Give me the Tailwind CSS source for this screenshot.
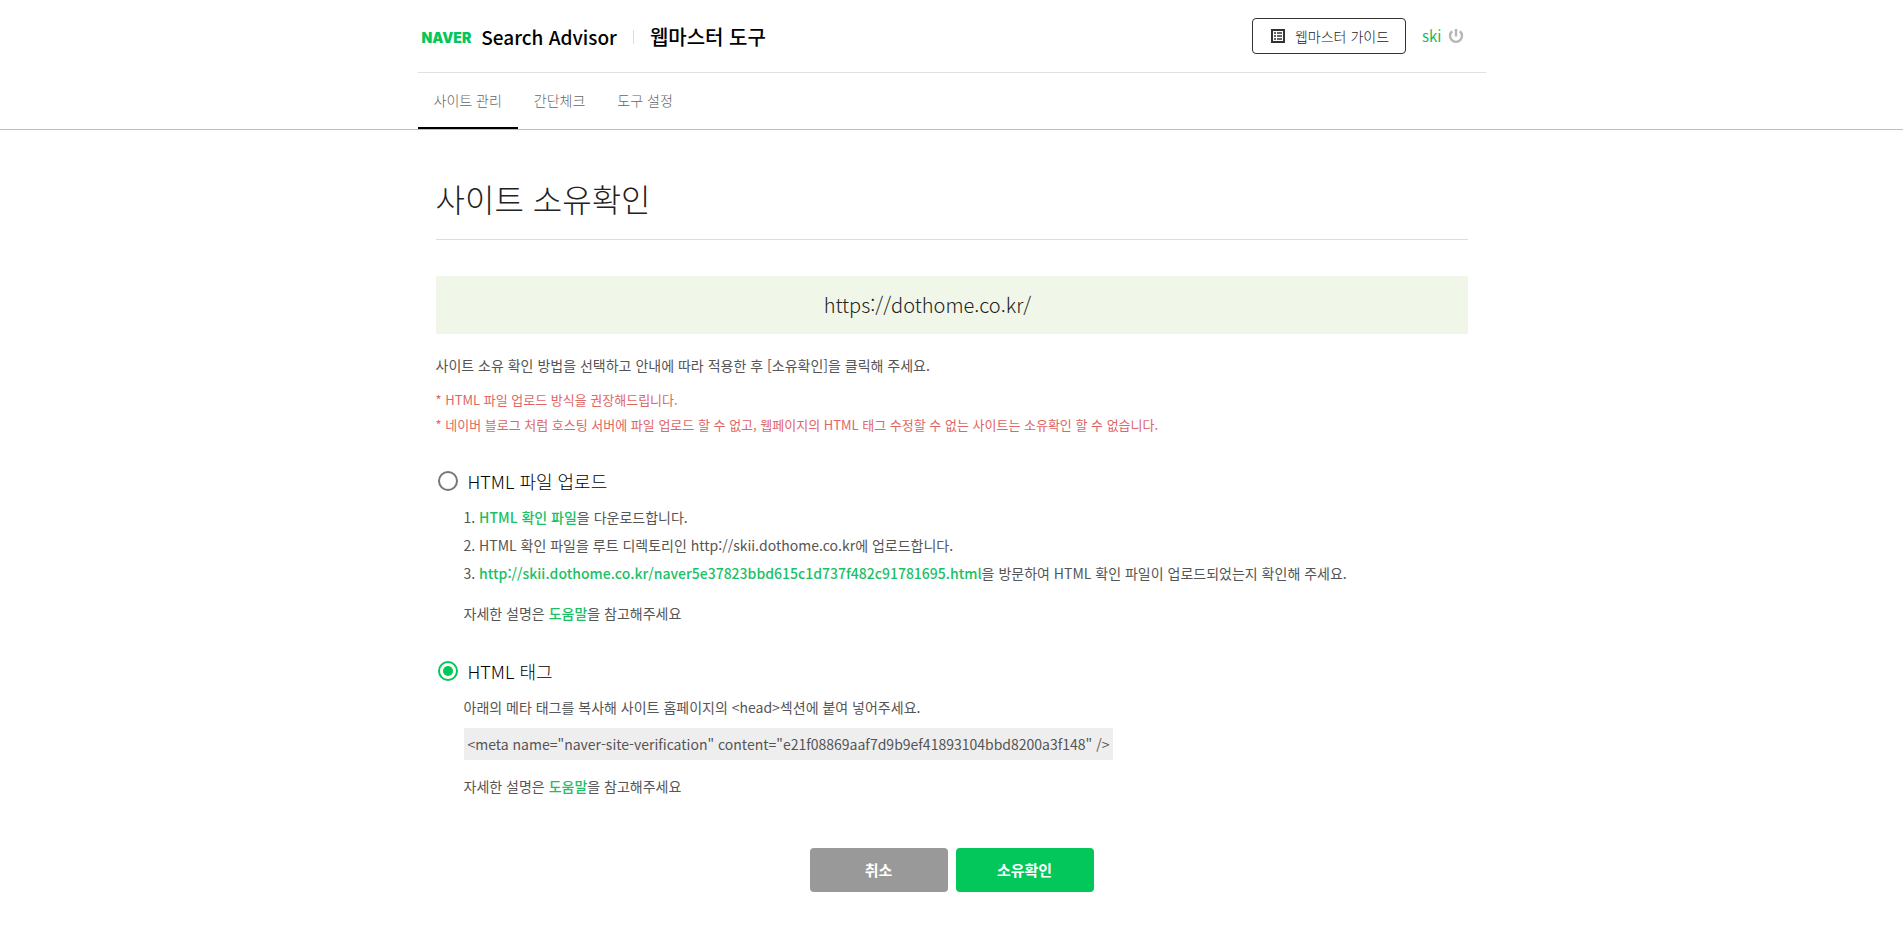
<!doctype html>
<html lang="ko">
<head>
  <meta charset="UTF-8">
  <meta name="viewport" content="width=device-width, initial-scale=1.0">
  <title>네이버 서치어드바이저 - 사이트 소유확인</title>
  <script src="https://cdn.jsdelivr.net/npm/@tailwindcss/browser@4"></script>
</head>

<body class="bg-white min-h-screen font-['Noto_Sans_CJK_KR',sans-serif] text-sm text-[#555]">
  <header class="border-b border-[#bdbdbd]">
    <div class="max-w-[1068px] mx-auto">
      <div class="flex items-center justify-between h-[73px] border-b border-[#e0e0e0] px-1">
        <div class="flex items-center pt-0.5 text-xl leading-8 font-medium text-black">
          <a href="#" class="font-['Inter',sans-serif] text-sm leading-8 font-black text-[#03c75a] pt-0.5">NAVER</a>
          <a href="#" class="ml-2.5 text-[19px]">Search Advisor</a>
          <span class="w-px h-3.5 bg-[#ddd] mx-4"></span>
          <a href="#">웹마스터 도구</a>
        </div>
        <div class="flex items-center pr-[18px]">
          <a href="#" class="flex items-center h-9 border border-[#333] rounded px-4 gap-2 font-light text-[#222]">
            <svg class="w-[18px] h-[18px]" viewBox="0 0 18 18" fill="none">
              <path d="M3 3h12v12H3z" stroke="#333" stroke-width="2" />
              <path d="M5 6h2M5 9h2M5 12h2M8 6h5M8 9h5M8 12h5" stroke="#333" stroke-width="1.5" />
            </svg>
            웹마스터 가이드
          </a>
          <a href="#" class="ml-4 text-[15px] text-[#1bb865]">ski</a>
          <button type="button" aria-label="로그아웃" class="ml-1.5">
            <svg class="w-4 h-4" viewBox="0 0 16 16" fill="none" stroke="#b5b5b5" stroke-width="2.4">
              <path d="M8 1v7.5" />
              <path d="M4.2 3.2A6 6 0 1 0 11.8 3.2" />
            </svg>
          </button>
        </div>
      </div>
      <nav class="flex h-14 font-light text-[#666]">
        <a href="#" class="flex items-center px-4 border-b-2 border-black">사이트 관리</a>
        <a href="#" class="flex items-center px-4 border-b-2 border-transparent">간단체크</a>
        <a href="#" class="flex items-center px-4 border-b-2 border-transparent">도구 설정</a>
      </nav>
    </div>
  </header>

  <main class="max-w-[1068px] mx-auto px-[18px] pt-11 pb-11">
    <h1 class="text-[32px] leading-12 font-light text-[#222] pb-[17px] border-b border-[#ddd]">사이트 소유확인</h1>
    <div class="mt-9 bg-[#f0f6e8] text-center text-xl leading-[58px] font-light text-[#222] pr-12">https://dothome.co.kr/</div>

    <p class="mt-[19px] leading-6">사이트 소유 확인 방법을 선택하고 안내에 따라 적용한 후 [소유확인]을 클릭해 주세요.</p>
    <div class="mt-2.5 text-[13px] leading-[25px] text-[#e06666]">
      <p>* HTML 파일 업로드 방식을 권장해드립니다.</p>
      <p>* 네이버 블로그 처럼 호스팅 서버에 파일 업로드 할 수 없고, 웹페이지의 HTML 태그 수정할 수 없는 사이트는 소유확인 할 수 없습니다.</p>
    </div>

    <form>
      <!-- HTML 파일 업로드 -->
      <div class="flex items-center gap-2.5 mt-8 pl-0.5 h-6">
        <input type="radio" name="verifyType" id="typeFile" class="appearance-none size-5 rounded-full border-2 border-[#777] p-[3px] bg-clip-content checked:border-[#03c75a] checked:bg-[#03c75a]">
        <label for="typeFile" class="text-lg leading-6 font-light text-black">HTML 파일 업로드</label>
      </div>
      <div class="pl-7">
        <ol class="mt-2.5 leading-7">
          <li>1. <a href="#" class="font-medium text-[#1bbf65]">HTML 확인 파일</a>을 다운로드합니다.</li>
          <li>2. HTML 확인 파일을 루트 디렉토리인 http://skii.dothome.co.kr에 업로드합니다.</li>
          <li>3. <a href="#" class="font-medium text-[#1bbf65]">http://skii.dothome.co.kr/naver5e37823bbd615c1d737f482c91781695.html</a>을 방문하여 HTML 확인 파일이 업로드되었는지 확인해 주세요.</li>
        </ol>
        <p class="mt-3 leading-7">자세한 설명은 <a href="#" class="font-medium text-[#1bbf65]">도움말</a>을 참고해주세요</p>
      </div>

      <!-- HTML 태그 -->
      <div class="flex items-center gap-2.5 mt-8 pl-0.5 h-6">
        <input type="radio" name="verifyType" id="typeTag" checked class="appearance-none size-5 rounded-full border-2 border-[#777] p-[3px] bg-clip-content checked:border-[#03c75a] checked:bg-[#03c75a]">
        <label for="typeTag" class="text-lg leading-6 font-light text-black">HTML 태그</label>
      </div>
      <div class="pl-7">
        <p class="mt-2.5 leading-7">아래의 메타 태그를 복사해 사이트 홈페이지의 &lt;head&gt;섹션에 붙여 넣어주세요.</p>
        <p class="mt-[7px] w-fit bg-[#eee] px-1 leading-8">&lt;meta name="naver-site-verification" content="e21f08869aaf7d9b9ef41893104bbd8200a3f148" /&gt;</p>
        <p class="mt-3 leading-7">자세한 설명은 <a href="#" class="font-medium text-[#1bbf65]">도움말</a>을 참고해주세요</p>
      </div>

      <div class="flex justify-center gap-2 mt-12 text-[15px] font-bold text-white">
        <button type="button" class="w-[138px] h-11 rounded bg-[#999]">취소</button>
        <button type="submit" class="w-[138px] h-11 rounded bg-[#03c75a]">소유확인</button>
      </div>
    </form>
  </main>
</body>

</html>
